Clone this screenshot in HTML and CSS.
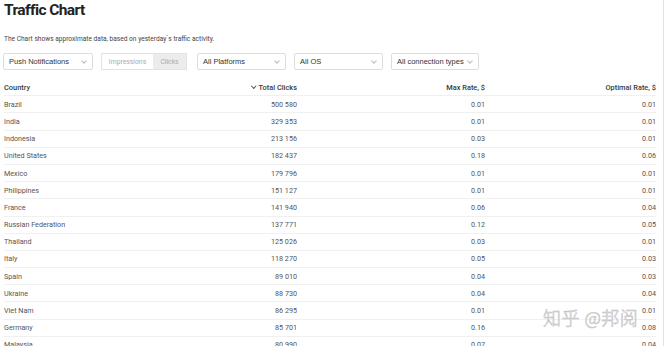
FILE: index.html
```html
<!DOCTYPE html>
<html lang="en">
<head>
    <meta charset="UTF-8">
    <meta name="viewport" content="width=device-width, initial-scale=1.0">
    <title>Traffic Chart</title>
    <link rel="stylesheet" href="styles.css">
</head>
<body>

<div class="page">
    <h1>Traffic Chart</h1>
    <p class="note">The Chart shows approximate data, based on yesterday`s traffic activity.</p>

    <div class="filters">
        <div class="select w-push">Push Notifications <span class="chev"></span></div>
        <div class="toggle">
            <span class="opt">Impressions</span>
            <span class="opt active">Clicks</span>
        </div>
        <div class="select w-platform">All Platforms <span class="chev"></span></div>
        <div class="select w-os">All OS <span class="chev"></span></div>
        <div class="select w-conn">All connection types <span class="chev"></span></div>
    </div>

    <table class="chart">
        <thead>
            <tr>
                <th class="country">Country</th>
                <th class="num clicks"><span class="sort"></span>Total Clicks</th>
                <th class="num max">Max Rate, $</th>
                <th class="num opt-rate">Optimal Rate, $</th>
            </tr>
        </thead>
        <tbody>
            <tr><td>Brazil</td><td class="num">500 580</td><td class="num">0.01</td><td class="num">0.01</td></tr>
            <tr><td>India</td><td class="num">329 353</td><td class="num">0.01</td><td class="num">0.01</td></tr>
            <tr><td>Indonesia</td><td class="num">213 156</td><td class="num">0.03</td><td class="num">0.01</td></tr>
            <tr><td>United States</td><td class="num">182 437</td><td class="num">0.18</td><td class="num">0.06</td></tr>
            <tr><td>Mexico</td><td class="num">179 796</td><td class="num">0.01</td><td class="num">0.01</td></tr>
            <tr><td>Philippines</td><td class="num">151 127</td><td class="num">0.01</td><td class="num">0.01</td></tr>
            <tr><td>France</td><td class="num">141 940</td><td class="num">0.06</td><td class="num">0.04</td></tr>
            <tr><td>Russian Federation</td><td class="num">137 771</td><td class="num">0.12</td><td class="num">0.05</td></tr>
            <tr><td>Thailand</td><td class="num">125 026</td><td class="num">0.03</td><td class="num">0.01</td></tr>
            <tr><td>Italy</td><td class="num">118 270</td><td class="num">0.05</td><td class="num">0.03</td></tr>
            <tr><td>Spain</td><td class="num">89 010</td><td class="num">0.04</td><td class="num">0.03</td></tr>
            <tr><td>Ukraine</td><td class="num">88 730</td><td class="num">0.04</td><td class="num">0.04</td></tr>
            <tr><td>Viet Nam</td><td class="num">86 295</td><td class="num">0.01</td><td class="num">0.01</td></tr>
            <tr><td>Germany</td><td class="num">85 701</td><td class="num">0.16</td><td class="num">0.08</td></tr>
            <tr><td>Malaysia</td><td class="num">80 990</td><td class="num">0.07</td><td class="num">0.04</td></tr>
        </tbody>
    </table>
</div>

<div class="watermark">知乎 @邦阅</div>

</body>
</html>
```

FILE: styles.css
```css
body {
    font-family: Roboto, 'Noto Sans', sans-serif;
    margin: 0;
    padding: 0;
    background-color: #fff;
    color: #333;
    overflow: hidden;
}

.page {
    padding: 0 7px 0 4px;
    border-right: 1px solid #e2e2e2;
    height: 346px;
    box-sizing: border-box;
}

h1 {
    margin: 0;
    padding-top: 0;
    font-size: 15.5px;
    line-height: 20px;
    font-weight: 700;
    color: #222;
    letter-spacing: -0.6px;
}

.note {
    margin: 14px 0 0;
    font-size: 6.6px;
    line-height: 10px;
    color: #444;
}

.filters {
    display: flex;
    margin-top: 9px;
    margin-left: -1px;
    font-family: 'Liberation Sans', Arial, sans-serif;
    font-size: 7.5px;
    color: #333;
}

.select {
    height: 17px;
    border: 1px solid #ddd;
    border-radius: 2px;
    box-sizing: border-box;
    display: flex;
    align-items: center;
    justify-content: space-between;
    padding: 0 6px 0 5px;
    margin-right: 8px;
}

.w-push { width: 90px; }
.w-platform { width: 89px; }
.w-os { width: 89px; }
.w-conn { width: 88px; }

.chev {
    width: 3px;
    height: 3px;
    border-right: 1px solid #bbb;
    border-bottom: 1px solid #bbb;
    transform: rotate(45deg);
    margin-top: -2px;
}

.toggle {
    display: flex;
    height: 17px;
    border: 1px solid #e2e2e2;
    box-sizing: border-box;
    margin-right: 10px;
    color: #aaa;
    font-family: Roboto, sans-serif;
    font-size: 6.8px;
}

.opt {
    display: flex;
    align-items: center;
    justify-content: center;
}

.opt:first-child { width: 51px; }

.opt.active {
    width: 33px;
    background-color: #ececec;
}

.chart {
    width: 100%;
    margin-top: 9px;
    border-collapse: separate;
    border-spacing: 0;
    font-size: 7.2px;
    color: #555;
}

.chart th,
.chart td {
    height: 17.2px;
    padding: 0;
    border-bottom: 1px solid #f0f0f0;
    box-sizing: border-box;
    white-space: nowrap;
}

.chart th {
    font-weight: 500;
    font-size: 7.4px;
    color: #3a3a3a;
    text-align: left;
}

.chart .num {
    text-align: right;
}

.chart th.clicks,
.chart tr td:nth-child(2) {
    width: 150px;
    padding-right: 0;
}

.chart th.max,
.chart tr td:nth-child(3) {
    width: 188px;
}

.chart th.opt-rate,
.chart tr td:nth-child(4) {
    width: 171px;
}

.sort {
    display: inline-block;
    width: 2.5px;
    height: 2.5px;
    border-right: 1px solid #555;
    border-bottom: 1px solid #555;
    transform: rotate(45deg);
    margin: 0 3px 2px 0;
}

.watermark {
    position: absolute;
    left: 543px;
    top: 304px;
    font-family: 'Noto Sans CJK SC', sans-serif;
    font-size: 18px;
    font-weight: 300;
    color: #fff;
    -webkit-text-stroke: 0.6px #c2c2c2;
    letter-spacing: 0.5px;
}
```
